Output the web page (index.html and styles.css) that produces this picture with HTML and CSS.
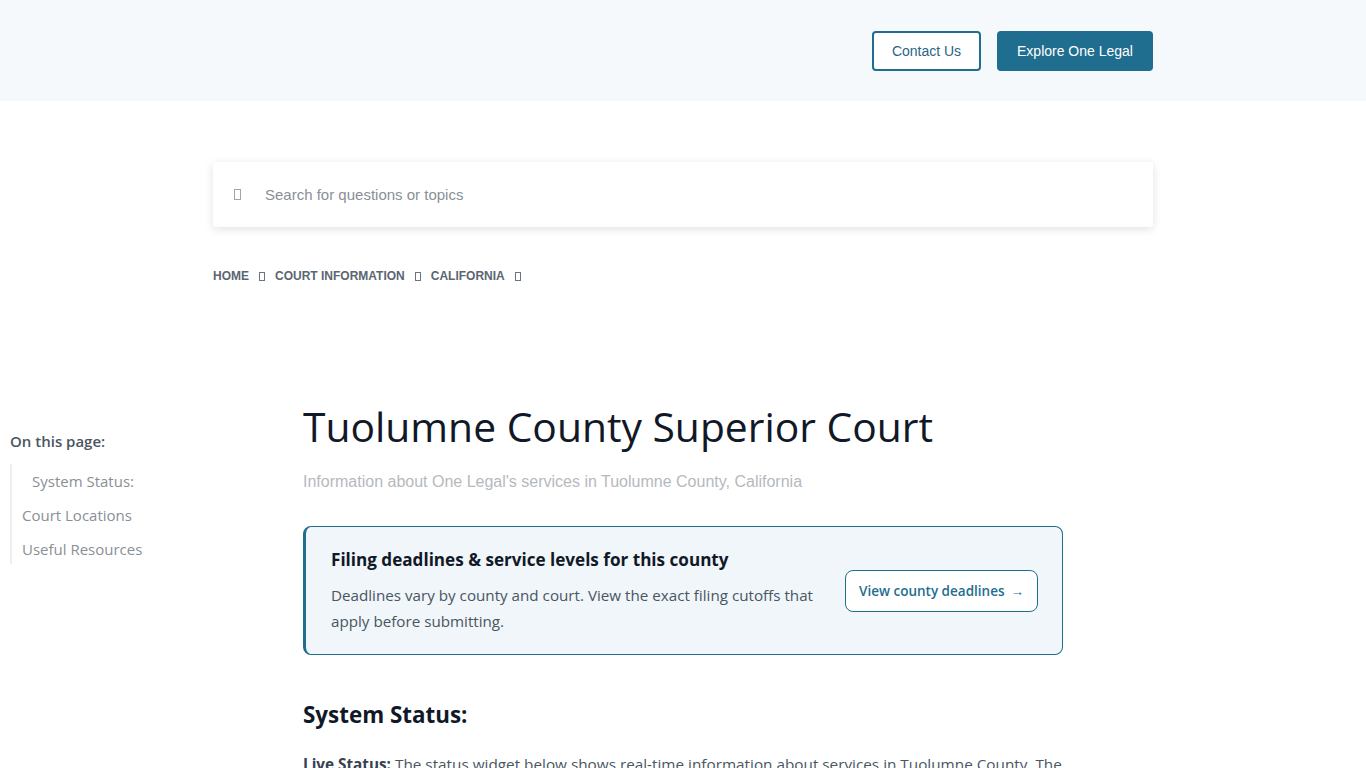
FILE: index.html
```html
<!DOCTYPE html>
<html lang="en">
<head>
    <meta charset="UTF-8">
    <meta name="viewport" content="width=device-width, initial-scale=1.0">
    <title>Tuolumne County Superior Court</title>
    <link rel="stylesheet" href="styles.css">
</head>
<body>

    <header class="top-bar">
        <div class="container top-bar-inner">
            <a href="#" class="btn btn-outline">Contact Us</a>
            <a href="#" class="btn btn-solid">Explore One Legal</a>
        </div>
    </header>

    <div class="container">
        <div class="search-box">
            <span class="tofu"></span>
            <input type="text" class="search-input" placeholder="Search for questions or topics">
        </div>

        <nav class="breadcrumb">
            <a href="#">Home</a>
            <span class="tofu small"></span>
            <a href="#">Court Information</a>
            <span class="tofu small"></span>
            <a href="#">California</a>
            <span class="tofu small"></span>
        </nav>
    </div>

    <div class="page">
        <aside class="toc">
            <div class="toc-title">On this page:</div>
            <ul class="toc-list">
                <li class="toc-sub"><a href="#">System Status:</a></li>
                <li><a href="#">Court Locations</a></li>
                <li><a href="#">Useful Resources</a></li>
            </ul>
        </aside>

        <main class="content">
            <h1 class="page-title">Tuolumne County Superior Court</h1>
            <p class="page-subtitle">Information about One Legal's services in Tuolumne County, California</p>

            <div class="callout">
                <div class="callout-text">
                    <h3>Filing deadlines &amp; service levels for this county</h3>
                    <p>Deadlines vary by county and court. View the exact filing cutoffs that apply before submitting.</p>
                </div>
                <a href="#" class="callout-btn">View county deadlines <span class="arrow">&rarr;</span></a>
            </div>

            <h2 class="section-title">System Status:</h2>
            <p class="section-text"><strong>Live Status:</strong> The status widget below shows real-time information about services in Tuolumne County. The</p>
        </main>
    </div>

</body>
</html>
```

FILE: styles.css
```css
body {
    margin: 0;
    font-family: "Open Sans", "Noto Sans", sans-serif;
    background-color: #fff;
    color: #4a5561;
}

.container {
    width: 940px;
    margin: 0 auto;
}

.top-bar {
    background-color: #f5f9fc;
    height: 101px;
}

.top-bar-inner {
    display: flex;
    justify-content: flex-end;
    align-items: center;
    gap: 16px;
    height: 101px;
}

.btn {
    display: inline-flex;
    align-items: center;
    justify-content: center;
    box-sizing: border-box;
    height: 40px;
    border-radius: 4px;
    font-family: "Liberation Sans", Arial, sans-serif;
    font-size: 14px;
    text-decoration: none;
}

.btn-outline {
    width: 109px;
    border: 2px solid #1f6d8f;
    color: #2a6584;
    background-color: #fff;
}

.btn-solid {
    width: 156px;
    background-color: #1f6d8f;
    color: #fff;
}

.search-box {
    display: flex;
    align-items: center;
    height: 65px;
    margin-top: 61px;
    padding: 0 21px;
    box-sizing: border-box;
    background-color: #fff;
    box-shadow: 0 2px 10px rgba(0, 0, 0, 0.12);
    border-radius: 3px;
}

.tofu {
    display: inline-block;
    width: 7px;
    height: 11px;
    border: 1px solid #a0a5ab;
    box-sizing: border-box;
}

.tofu.small {
    width: 6px;
    height: 9px;
    border-color: #6b7480;
}

.search-input {
    flex: 1;
    margin-left: 22px;
    border: none;
    outline: none;
    font-family: "Liberation Sans", Arial, sans-serif;
    font-size: 15px;
    color: #333;
    background: transparent;
}

.search-input::placeholder {
    color: #8a8f96;
}

.breadcrumb {
    display: flex;
    align-items: center;
    gap: 10px;
    margin-top: 42px;
    font-family: "Liberation Sans", Arial, sans-serif;
    font-size: 12px;
    font-weight: bold;
    text-transform: uppercase;
}

.breadcrumb a {
    color: #5b6573;
    text-decoration: none;
}

.page {
    display: flex;
    margin-top: 112px;
}

.toc {
    width: 303px;
    flex-shrink: 0;
    padding-left: 10px;
    box-sizing: border-box;
    margin-top: 36px;
}

.toc-title {
    font-size: 15px;
    font-weight: 600;
    color: #4a5561;
}

.toc-list {
    list-style: none;
    margin: 13px 0 0;
    padding: 6px 0 4px 10px;
    border-left: 2px solid #eceef0;
}

.toc-list li {
    margin-bottom: 12px;
}

.toc-list li:last-child {
    margin-bottom: 0;
}

.toc-list a {
    font-size: 15px;
    color: #8a8f96;
    text-decoration: none;
}

.toc-sub {
    padding-left: 10px;
}

.content {
    width: 760px;
}

.page-title {
    margin: 3px 0 0;
    font-size: 40.8px;
    font-weight: 500;
    color: #111827;
    line-height: 56px;
}

.page-subtitle {
    margin: 19px 0 0;
    font-family: "Liberation Sans", Arial, sans-serif;
    font-size: 16px;
    color: #b5b9be;
}

.callout {
    display: flex;
    align-items: center;
    gap: 24px;
    margin-top: 35px;
    padding: 21px 24px 20px 25px;
    border: 1px solid #1f6d8f;
    border-left: 3px solid #1f6d8f;
    border-radius: 8px;
    background-color: #f0f6fa;
}

.callout-text {
    flex: 1;
}

.callout-text h3 {
    margin: 0;
    font-size: 17.1px;
    font-weight: 700;
    color: #111827;
}

.callout-text p {
    margin: 11px 0 0;
    font-size: 15.2px;
    line-height: 26px;
    color: #4a5561;
}

.callout-btn {
    flex-shrink: 0;
    display: inline-flex;
    align-items: center;
    height: 42px;
    padding: 0 13px;
    box-sizing: border-box;
    border: 1px solid #1f6d8f;
    border-radius: 8px;
    background-color: #fff;
    color: #1f6d8f;
    font-size: 13.5px;
    font-weight: 600;
    text-decoration: none;
}

.arrow {
    margin-left: 6px;
}

.section-title {
    margin: 44px 0 0;
    font-size: 22.4px;
    font-weight: 700;
    color: #111827;
}

.section-text {
    margin: 21px 0 0;
    font-size: 15.3px;
    line-height: 26px;
    color: #4a5561;
}

.section-text strong {
    color: #374151;
}
```
